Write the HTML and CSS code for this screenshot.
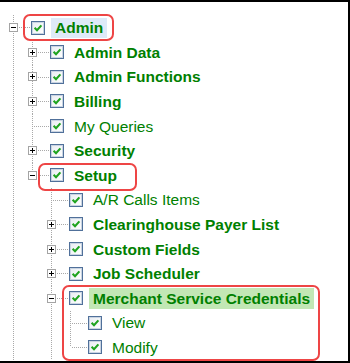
FILE: index.html
```html
<!DOCTYPE html>
<html>
<head>
<meta charset="utf-8">
<link rel="stylesheet" href="styles.css">
</head>
<body>
<div class="frame">
  <svg width="0" height="0" class="defs">
    <defs>
      <linearGradient id="cbg" x1="0" y1="0" x2="1" y2="1">
        <stop offset="0" stop-color="#e9edf2"/>
        <stop offset="1" stop-color="#ffffff"/>
      </linearGradient>
      <symbol id="cb" viewBox="0 0 14 14">
        <rect x="0.5" y="0.5" width="13" height="13" fill="#fff" stroke="#50709a"/>
        <rect x="1.5" y="1.5" width="11" height="11" fill="url(#cbg)" stroke="#c9d4e2"/>
        <path d="M3.6 6.8 L6 9.2 L10.4 4.4" fill="none" stroke="#1fa31f" stroke-width="2.1"/>
      </symbol>
    </defs>
  </svg>
  <ul class="tree">
    <li class="more">
      <div class="row"><span class="gut"><span class="exp minus"></span></span><svg class="cb"><use href="#cb"/></svg><span class="lbl b blue">Admin</span></div>
      <ul>
        <li class="more"><div class="row"><span class="gut"><span class="exp plus"></span></span><svg class="cb"><use href="#cb"/></svg><span class="lbl b">Admin Data</span></div></li>
        <li class="more"><div class="row"><span class="gut"><span class="exp plus"></span></span><svg class="cb"><use href="#cb"/></svg><span class="lbl b">Admin Functions</span></div></li>
        <li class="more"><div class="row"><span class="gut"><span class="exp plus"></span></span><svg class="cb"><use href="#cb"/></svg><span class="lbl b">Billing</span></div></li>
        <li class="more"><div class="row"><span class="gut"></span><svg class="cb"><use href="#cb"/></svg><span class="lbl">My Queries</span></div></li>
        <li class="more"><div class="row"><span class="gut"><span class="exp plus"></span></span><svg class="cb"><use href="#cb"/></svg><span class="lbl b">Security</span></div></li>
        <li class="last">
          <div class="row"><span class="gut"><span class="exp minus"></span></span><svg class="cb"><use href="#cb"/></svg><span class="lbl b">Setup</span></div>
          <ul>
            <li class="more"><div class="row"><span class="gut"></span><svg class="cb"><use href="#cb"/></svg><span class="lbl">A/R Calls Items</span></div></li>
            <li class="more"><div class="row"><span class="gut"><span class="exp plus"></span></span><svg class="cb"><use href="#cb"/></svg><span class="lbl b">Clearinghouse Payer List</span></div></li>
            <li class="more"><div class="row"><span class="gut"><span class="exp plus"></span></span><svg class="cb"><use href="#cb"/></svg><span class="lbl b">Custom Fields</span></div></li>
            <li class="more"><div class="row"><span class="gut"><span class="exp plus"></span></span><svg class="cb"><use href="#cb"/></svg><span class="lbl b">Job Scheduler</span></div></li>
            <li class="more">
              <div class="row"><span class="gut"><span class="exp minus"></span></span><svg class="cb"><use href="#cb"/></svg><span class="lbl b green">Merchant Service Credentials</span></div>
              <ul>
                <li class="more"><div class="row"><span class="gut"></span><svg class="cb"><use href="#cb"/></svg><span class="lbl">View</span></div></li>
                <li class="last"><div class="row"><span class="gut"></span><svg class="cb"><use href="#cb"/></svg><span class="lbl">Modify</span></div></li>
              </ul>
            </li>
          </ul>
        </li>
      </ul>
    </li>
  </ul>
  <div class="mark mark-admin"></div>
  <div class="mark mark-setup"></div>
  <div class="mark mark-merchant"></div>
</div>
</body>
</html>
```

FILE: styles.css
```css
html, body {
  margin: 0;
  padding: 0;
  background: #fff;
}
.frame {
  position: relative;
  width: 350px;
  height: 363px;
  box-sizing: border-box;
  border-top: 2px solid #000;
  border-right: 2px solid #000;
  border-bottom: 2px solid #000;
  padding: 13.4px 0 0 4px;
  overflow: hidden;
  font-family: "Liberation Sans", Arial, sans-serif;
}
.defs {
  position: absolute;
  width: 0;
  height: 0;
}
.tree, .tree ul {
  list-style: none;
  margin: 0;
  padding: 0;
}
.tree ul {
  padding-left: 19px;
}
.tree li {
  background-repeat: no-repeat;
  background-image: repeating-linear-gradient(to bottom, #a9a9a9 0 1px, transparent 1px 2px);
  background-position: 9px 0;
}
.tree li.more {
  background-size: 1px 100%;
}
.tree li.last {
  background-size: 1px 12.3px;
}
.row {
  display: flex;
  align-items: center;
  height: 24.6px;
}
.gut {
  align-self: stretch;
  width: 27px;
  flex: none;
  display: flex;
  align-items: center;
  background-repeat: no-repeat;
  background-image: repeating-linear-gradient(to right, #a9a9a9 0 1px, transparent 1px 2px);
  background-position: 11px 12px;
  background-size: 16px 1px;
}
.exp {
  position: relative;
  margin-left: 5px;
  width: 9px;
  height: 9px;
  box-sizing: border-box;
  border: 1px solid #a4a4a4;
  background: #fff;
}
.exp::before {
  content: "";
  position: absolute;
  left: 1px;
  top: 3px;
  width: 5px;
  height: 1px;
  background: #000;
}
.exp.plus::after {
  content: "";
  position: absolute;
  left: 3px;
  top: 1px;
  width: 1px;
  height: 5px;
  background: #000;
}
.cb {
  width: 14px;
  height: 14px;
  flex: none;
}
.lbl {
  margin-left: 6px;
  margin-top: 1px;
  padding: 0 4px;
  font-size: 15.5px;
  line-height: 20px;
  color: #008000;
  white-space: nowrap;
}
.lbl.b {
  font-weight: bold;
}
.lbl.blue {
  background: #deeaf8;
}
.lbl.green {
  background: #c2e7b5;
  line-height: 21px;
}
.mark {
  position: absolute;
  box-sizing: border-box;
  border: 2.5px solid #ee4545;
  border-radius: 7px;
}
.mark-admin {
  left: 23px;
  top: 12px;
  width: 91px;
  height: 27px;
}
.mark-setup {
  left: 38px;
  top: 161px;
  width: 99px;
  height: 28px;
}
.mark-merchant {
  left: 62px;
  top: 283px;
  width: 258px;
  height: 76px;
}
```
